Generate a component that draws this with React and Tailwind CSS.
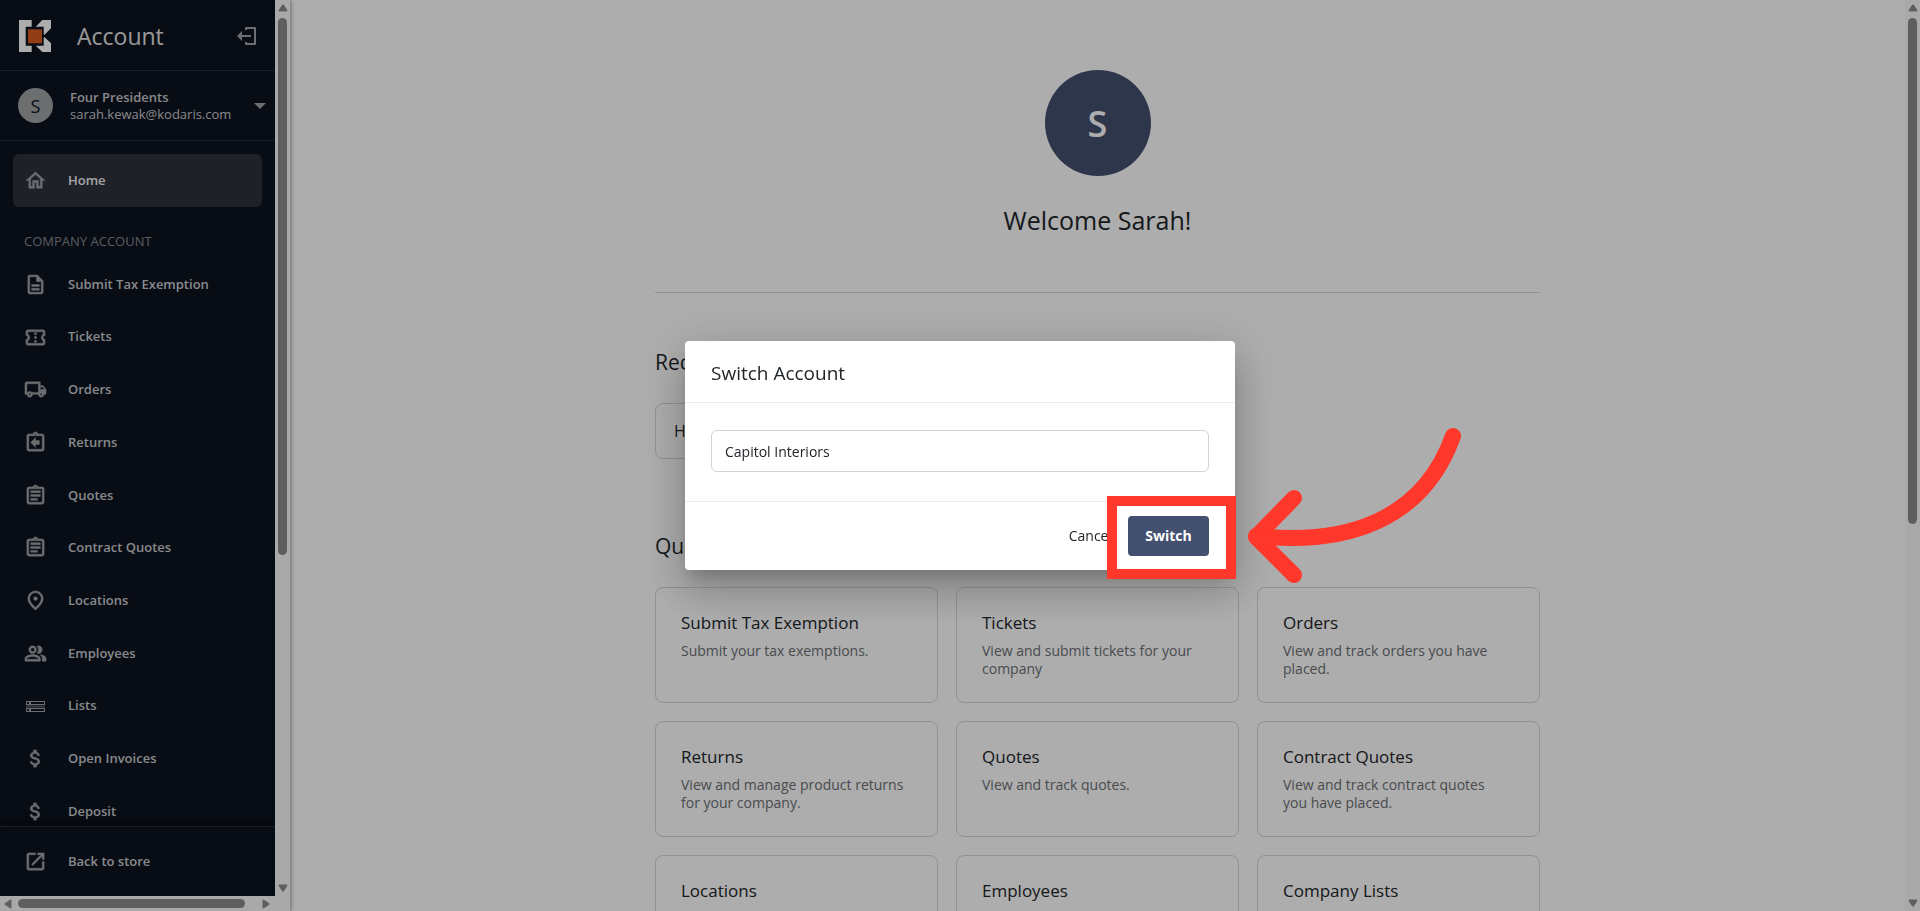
import React, { useState } from "react";
import {
  MdAttachMoney,
  MdOpenInNew,
  MdOutlineAssignment,
  MdOutlineAssignmentReturn,
  MdOutlineConfirmationNumber,
  MdOutlineDescription,
  MdOutlineHome,
  MdOutlineLocalShipping,
  MdOutlinePeopleAlt,
  MdOutlinePlace,
} from "react-icons/md";

const ListsIcon = ({ className }) => (
  <svg viewBox="0 0 23 23" className={className} fill="currentColor">
    <path
      fillRule="evenodd"
      d="M2 6h19v4H2zM3 7v2h2V7zM7 7v2h13V7zM2 13h19v4H2zM3 14v2h2v-2zM7 14v2h13v-2z"
    />
    <path fillOpacity="0.5" d="M2 10.500h19v2H2z" />
  </svg>
);

const companyLinks = [
  { label: "Submit Tax Exemption", icon: MdOutlineDescription },
  { label: "Tickets", icon: MdOutlineConfirmationNumber },
  { label: "Orders", icon: MdOutlineLocalShipping },
  { label: "Returns", icon: MdOutlineAssignmentReturn },
  { label: "Quotes", icon: MdOutlineAssignment },
  { label: "Contract Quotes", icon: MdOutlineAssignment },
  { label: "Locations", icon: MdOutlinePlace },
  { label: "Employees", icon: MdOutlinePeopleAlt },
  { label: "Lists", icon: ListsIcon },
  { label: "Open Invoices", icon: MdAttachMoney },
  { label: "Deposit", icon: MdAttachMoney },
];

const quickLinks = [
  { title: "Submit Tax Exemption", text: "Submit your tax exemptions." },
  { title: "Tickets", text: "View and submit tickets for your company" },
  { title: "Orders", text: "View and track orders you have placed." },
  { title: "Returns", text: "View and manage product returns for your company." },
  { title: "Quotes", text: "View and track quotes." },
  { title: "Contract Quotes", text: "View and track contract quotes you have placed." },
  { title: "Locations" },
  { title: "Employees" },
  { title: "Company Lists" },
];

const Logo = () => (
  <svg viewBox="0 0 32 32" className="h-8 w-8 shrink-0">
    <path fill="#fff" d="M0 0h12.700v6.700H6.700v19h6V32H0z" />
    <path fill="#fff" d="M23.300 0H32v8.300L25.300 15l-.6-1V6.700h-8z" />
    <path fill="#fff" d="M25.300 17L32 23.300V32h-8.700l-6.600-6.300h8V18z" />
    <path fill="#d85a20" d="M9 9.300h14v14H9z" />
  </svg>
);

const Arrow = ({ className }) => (
  <svg viewBox="0 0 10 8" className={className} fill="#8b8b8b">
    <path d="M5 .5c.4 0 .7.2 1 .6l3.300 5c.4.7 0 1.400-.8 1.400h-7c-.8 0-1.200-.7-.8-1.400l3.300-5c.3-.4.6-.6 1-.6z" />
  </svg>
);

const VerticalScrollbar = ({ thumbClass }) => (
  <div className="flex w-[15px] shrink-0 flex-col items-center justify-between bg-[#fafafa] py-1">
    <div className="flex min-h-0 flex-1 flex-col items-center gap-[6px]">
      <Arrow className="h-2 w-[10px] shrink-0" />
      <div className={`w-[9px] rounded-full bg-[#8b8b8b] ${thumbClass}`} />
    </div>
    <Arrow className="h-2 w-[10px] shrink-0 rotate-180" />
  </div>
);

const NavLink = ({ label, icon: Icon, iconClass = "stroke-[0.5px]", className = "" }) => (
  <a href="#" className={`flex items-center gap-[21px] text-[13px] font-semibold text-[#c9cbce] ${className}`}>
    <Icon className={`h-[23px] w-[23px] shrink-0 text-[#a0a2a6] [&_[fill=none]]:stroke-none ${iconClass}`} />
    {label}
  </a>
);

const Sidebar = () => (
  <aside className="flex w-[290px] shrink-0 flex-col shadow-[1px_0_4px_rgba(0,0,0,0.4)]">
    <div className="flex min-h-0 flex-1">
      <div className="flex min-w-0 flex-1 flex-col bg-[#0c131f]">
        {/* Header */}
        <div className="flex h-[71px] shrink-0 items-center border-b border-[#2a303b] pt-[2px] pr-[18px] pl-[19px]">
          <Logo />
          <span className="ml-[26px] flex-1 text-[23px] text-[#e0e1e3]">Account</span>
          <button type="button" aria-label="Sign out">
            <svg viewBox="0 0 20 20" className="h-5 w-5" fill="none" stroke="#a0a2a6" strokeWidth="2">
              <path strokeLinejoin="round" d="M9 4V2h9v16H9v-2M14 10H4" />
              <path fill="#a0a2a6" stroke="none" d="M0 10l5-5v10z" />
            </svg>
          </button>
        </div>

        {/* Current account */}
        <button
          type="button"
          className="flex h-[70px] shrink-0 items-center border-b border-[#2a303b] pr-[9px] pl-[18px] text-left text-[13px] leading-[17px] text-[#c9cbce]"
        >
          <span className="flex h-[35px] w-[35px] items-center justify-center rounded-full bg-[#a0a2a6] text-lg text-[#0c131f]">
            S
          </span>
          <span className="ml-[17px] flex-1">
            <span className="block font-semibold">Four Presidents</span>
            <span className="block">sarah.kewak@kodaris.com</span>
          </span>
          <svg viewBox="0 0 12 6" className="h-[6px] w-3" fill="#a0a2a6">
            <path d="M0 0h12L6 6z" />
          </svg>
        </button>

        {/* Links */}
        <nav className="min-h-0 flex-1 overflow-hidden pt-[13px]">
          <NavLink
            label="Home"
            icon={MdOutlineHome}
            className="mx-[13px] h-[53px] rounded-md bg-[#2d323c] px-[11px] text-[#f2f2f2]"
          />
          <h2 className="mt-[25px] mb-2 px-6 text-[13px] leading-[18px] text-[#85888e]">COMPANY ACCOUNT</h2>
          <div className="grid h-[580px] auto-rows-fr px-6">
            {companyLinks.map((link) => (
              <NavLink key={link.label} {...link} iconClass={link.icon === ListsIcon ? "" : "stroke-[0.5px]"} />
            ))}
          </div>
        </nav>

        <div className="flex h-[70px] shrink-0 border-t border-[#2a303b] px-6 shadow-[0_-3px_8px_rgba(0,0,0,0.5)]">
          <NavLink label="Back to store" icon={MdOpenInNew} />
        </div>
      </div>
      <VerticalScrollbar thumbClass="h-[537px]" />
    </div>
    <div className="flex h-[15px] shrink-0 items-center bg-[#fafafa] pr-[19px] pl-[3px]">
      <Arrow className="h-2 w-[10px] -rotate-90" />
      <div className="ml-[5px] h-[9px] w-[227px] rounded-full bg-[#8b8b8b]" />
      <Arrow className="ml-auto h-2 w-[10px] rotate-90" />
    </div>
  </aside>
);

const Dashboard = () => (
  <main className="min-w-0 flex-1 overflow-hidden">
    <div className="mx-auto max-w-[885px] pt-[70px] text-[#212529]">
      <div className="flex flex-col items-center border-b border-[#d5d7da] pb-[52px]">
        <div className="flex h-[106px] w-[106px] items-center justify-center rounded-full bg-[#44506f] pt-[2px] text-4xl font-semibold text-white">
          S
        </div>
        <h1 className="mt-6 text-[25px] leading-10">Welcome Sarah!</h1>
      </div>

      <h2 className="mt-[54px] text-[21px] leading-[30px]">Recent Pages</h2>
      <a
        href="#"
        className="mt-[26px] flex h-[56px] w-fit items-center rounded-lg border border-[#d5d7da] px-[18px] text-base"
      >
        Home
      </a>

      <h2 className="mt-[72px] text-[21px] leading-[30px]">Quick Links</h2>
      <div className="mt-[26px] grid grid-cols-3 gap-[18px]">
        {quickLinks.map((link) => (
          <a
            key={link.title}
            href="#"
            className="h-[116px] rounded-lg border border-[#d5d7da] pt-[23px] pr-[30px] pl-[25px]"
          >
            <h3 className="text-[17px] leading-6">{link.title}</h3>
            {link.text && <p className="mt-[7px] text-sm leading-[18px] text-[#6c6f75]">{link.text}</p>}
          </a>
        ))}
      </div>
    </div>
  </main>
);

const SwitchDialog = () => {
  const [account, setAccount] = useState("Capitol Interiors");

  return (
    <div
      role="dialog"
      aria-labelledby="switch-title"
      className="w-[550px] rounded bg-white text-[#212529] shadow-[0_11px_15px_-7px_rgba(0,0,0,0.2),0_24px_38px_3px_rgba(0,0,0,0.14),0_9px_46px_8px_rgba(0,0,0,0.12)]"
    >
      <h2 id="switch-title" className="border-b border-[#ececec] px-[26px] pt-[18px] pb-[14px] text-[19px] leading-[29px]">
        Switch Account
      </h2>
      <div className="px-[26px] pt-[27px] pb-[29px]">
        <input
          type="text"
          aria-label="Account"
          value={account}
          onChange={(e) => setAccount(e.target.value)}
          className="h-[42px] w-full rounded-md border border-[#ced4da] px-[13px] text-sm outline-none"
        />
      </div>
      <div className="flex h-[69px] items-center justify-end gap-4 border-t border-[#ececec] pr-[26px] text-sm">
        <button type="button">Cancel</button>
        <div className="relative">
          <button type="button" className="h-10 w-[81px] rounded bg-[#44506f] text-sm font-bold text-white">
            Switch
          </button>
          {/* Highlight around the button and the arrow that points at it */}
          <div className="pointer-events-none absolute -top-5 -right-[27px] -bottom-[23px] -left-[21px] border-[10px] border-[#ff382b]" />
          <svg
            viewBox="0 0 230 170"
            className="pointer-events-none absolute -top-24 left-28 h-[170px] w-[230px]"
            fill="none"
            stroke="#ff382b"
            strokeWidth="16"
            strokeLinecap="round"
            strokeLinejoin="round"
          >
            <path d="M54 78L16 117l38 38" />
            <path d="M16 116C107 126 183 100 213 16" />
          </svg>
        </div>
      </div>
    </div>
  );
};

const App = () => (
  <div className="flex h-screen overflow-hidden bg-white font-['Segoe_UI','Open_Sans',sans-serif]">
    <Sidebar />
    <Dashboard />
    <VerticalScrollbar thumbClass="h-[506px]" />
    <div className="fixed inset-0 flex items-center justify-center bg-black/32">
      <SwitchDialog />
    </div>
  </div>
);

export default App;
